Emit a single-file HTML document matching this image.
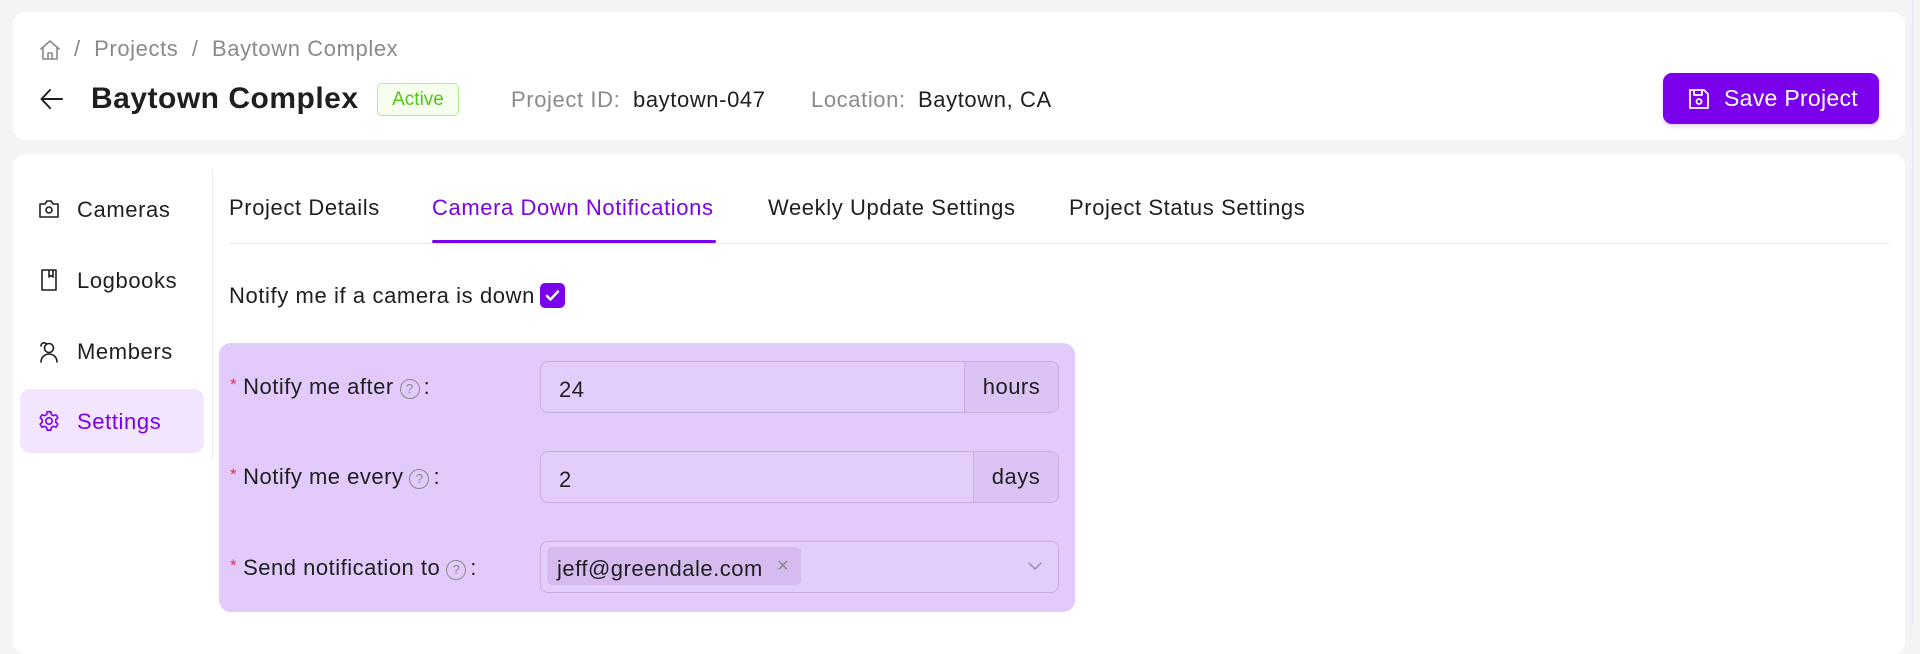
<!DOCTYPE html>
<html><head><meta charset="utf-8"><style>
*{box-sizing:border-box;margin:0;padding:0}
body{width:1920px;height:625px;background:#f4f4f4;font-family:"Liberation Sans",sans-serif;color:#1f1f1f;position:relative;overflow:hidden}
.abs{position:absolute}
.card{position:absolute;background:#fff;border-radius:12px}
.t21{font-size:22px;line-height:1;letter-spacing:0.6px}
.gray{color:#8a8a8a}
svg{position:absolute;fill:none;stroke-linecap:round;stroke-linejoin:round}
.row{position:absolute;left:230px;font-size:22px;line-height:1;letter-spacing:0.5px}
.inp{position:absolute;left:540px;width:519px;height:52px;border:1.5px solid #c7aee6;border-radius:8px;background:#e3cdfc;font-size:22px;letter-spacing:0.5px}
.suf{position:absolute;right:0;top:0;bottom:0;border-left:1.5px solid #c7aee6;background:#dcc3f6;display:flex;align-items:center;justify-content:center;border-radius:0 8px 8px 0}
.q{display:inline-block;width:20px;height:20px;border:1.5px solid #8a8a8a;border-radius:50%;font-size:13px;color:#8a8a8a;text-align:center;line-height:17px;vertical-align:1px;margin:0 4px 0 6px;letter-spacing:0}
.star{color:#e0305a;font-size:17px;vertical-align:4px;margin-right:6px}
</style></head><body>
<div class="card" style="left:13px;top:12px;width:1892px;height:128px"></div>
<div class="card" style="left:13px;top:154px;width:1892px;height:500px"></div>
<div class="abs" style="left:1912px;top:0;width:2px;height:625px;background:#e6ecf8"></div>

<svg style="left:38px;top:38px" width="24" height="24" viewBox="0 0 24 24" stroke="#8a8a8a" stroke-width="1.6"><path d="M3 11 12 3l9 8M5 9.5V21h14V9.5M10 21v-6h4v6"/></svg>
<div class="abs t21 gray" style="left:74px;top:38px">/&nbsp;&nbsp;Projects&nbsp;&nbsp;/&nbsp;&nbsp;Baytown Complex</div>

<svg style="left:39px;top:87px" width="26" height="24" viewBox="0 0 26 24" stroke="#1f1f1f" stroke-width="2"><path d="M23 12H3M11 3 2.5 12 11 21"/></svg>
<div class="abs" style="left:91px;top:84px;font-size:30px;font-weight:bold;line-height:1;letter-spacing:0.5px">Baytown Complex</div>
<div class="abs" style="left:377px;top:83px;width:82px;height:33px;border:1.5px solid #b7eb8f;background:#f6ffed;border-radius:5px;color:#52c41a;font-size:19px;display:flex;align-items:center;justify-content:center">Active</div>
<div class="abs t21 gray" style="left:511px;top:89px">Project ID:</div>
<div class="abs t21" style="left:633px;top:89px">baytown-047</div>
<div class="abs t21 gray" style="left:811px;top:89px">Location:</div>
<div class="abs t21" style="left:918px;top:89px">Baytown, CA</div>

<div class="abs" style="left:1663px;top:73px;width:216px;height:51px;background:#7b00ec;border-radius:9px;box-shadow:0 2px 4px rgba(123,0,236,.2)"></div>
<svg style="left:1688px;top:88px" width="22" height="22" viewBox="0 0 22 22" stroke="#fff" stroke-width="1.8"><path d="M2 2h14l4 4v14H2zM6 2v5h8V2"/><circle cx="11" cy="13.5" r="2.5"/></svg>
<div class="abs" style="left:1724px;top:87px;color:#fff;font-size:23px;line-height:1;letter-spacing:0.3px">Save Project</div>

<div class="abs" style="left:212px;top:169px;width:1px;height:290px;background:#ececec"></div>
<div class="abs" style="left:20px;top:389px;width:184px;height:64px;background:#f3e5fe;border-radius:10px"></div>
<svg style="left:38px;top:199px" width="22" height="20" viewBox="0 0 22 20" stroke="#1f1f1f" stroke-width="1.6"><path d="M2 5h5l2-3h4l2 3h5v13H2z"/><circle cx="11" cy="11" r="3"/></svg>
<div class="abs t21" style="left:77px;top:199px">Cameras</div>
<svg style="left:39px;top:268px" width="20" height="24" viewBox="0 0 20 24" stroke="#1f1f1f" stroke-width="1.6"><path d="M3 2h14v20H3zM10 2v7l2-1.5L14 9V2"/></svg>
<div class="abs t21" style="left:77px;top:270px">Logbooks</div>
<svg style="left:38px;top:340px" width="22" height="24" viewBox="0 0 22 24" stroke="#1f1f1f" stroke-width="1.6"><circle cx="11" cy="8" r="4.5"/><path d="M3 22c0-5 4-8 8-8s8 3 8 8M8 3.5C6 2 3 3 3 6"/></svg>
<div class="abs t21" style="left:77px;top:341px">Members</div>
<svg style="left:38px;top:410px" width="22" height="22" viewBox="0 0 24 24" stroke="#7b00ec" stroke-width="1.7"><circle cx="12" cy="12" r="3.5"/><path d="M10 2h4l.6 3 2.2 1.2 2.9-1 2 3.4-2.3 2v2.8l2.3 2-2 3.4-2.9-1-2.2 1.2L14 22h-4l-.6-3-2.2-1.2-2.9 1-2-3.4 2.3-2v-2.8l-2.3-2 2-3.4 2.9 1L9.4 5z"/></svg>
<div class="abs t21" style="left:77px;top:411px;color:#7b00ec">Settings</div>

<div class="abs t21" style="left:229px;top:197px">Project Details</div>
<div class="abs t21" style="left:432px;top:197px;color:#7b00ec">Camera Down Notifications</div>
<div class="abs t21" style="left:768px;top:197px">Weekly Update Settings</div>
<div class="abs t21" style="left:1069px;top:197px">Project Status Settings</div>
<div class="abs" style="left:229px;top:243px;width:1660px;height:1px;background:#e8e8e8"></div>
<div class="abs" style="left:432px;top:240px;width:284px;height:3px;background:#7b00ec;border-radius:2px"></div>

<div class="abs t21" style="left:229px;top:285px">Notify me if a camera is down</div>
<div class="abs" style="left:540px;top:283px;width:25px;height:25px;background:#7b00ec;border-radius:5px"></div>
<svg style="left:544px;top:287px" width="17" height="17" viewBox="0 0 17 17" stroke="#fff" stroke-width="2.5"><path d="M3 9l3.5 3.5L14 4.5"/></svg>

<div class="abs" style="left:219px;top:343px;width:856px;height:269px;background:#e2cafc;border-radius:12px"></div>
<div class="row" style="top:376px"><span class="star">*</span>Notify me after<span class="q">?</span>:</div>
<div class="inp" style="top:361px"><span class="abs" style="left:18px;top:15px">24</span><div class="suf" style="width:94px">hours</div></div>
<div class="row" style="top:466px"><span class="star">*</span>Notify me every<span class="q">?</span>:</div>
<div class="inp" style="top:451px"><span class="abs" style="left:18px;top:15px">2</span><div class="suf" style="width:85px">days</div></div>
<div class="row" style="top:557px"><span class="star">*</span>Send notification to<span class="q">?</span>:</div>
<div class="inp" style="top:541px">
 <div class="abs" style="left:6px;top:5px;width:254px;height:38px;background:#d6bbf0;border-radius:5px"></div>
 <span class="abs" style="left:16px;top:14px">jeff@greendale.com</span>
 <span class="abs" style="left:236px;top:13px;color:#888;font-size:20px">×</span>
 <svg style="left:486px;top:18px" width="16" height="12" viewBox="0 0 16 12" stroke="#a08ab8" stroke-width="1.5"><path d="M2 3l6 6 6-6"/></svg>
</div>
</body></html>
